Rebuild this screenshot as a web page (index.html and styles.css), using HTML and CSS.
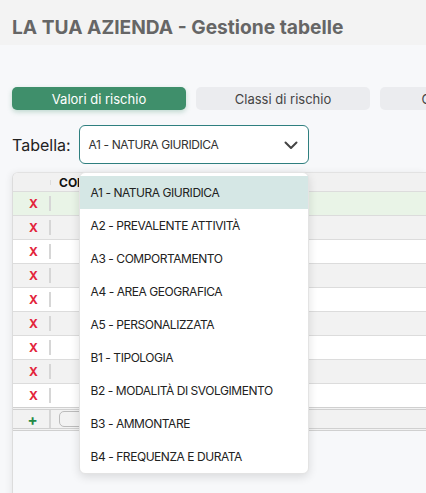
FILE: index.html
```html
<!DOCTYPE html>
<html lang="it">
<head>
  <meta charset="UTF-8">
  <title>Gestione tabelle</title>
  <link rel="stylesheet" href="styles.css">
</head>
<body>

  <!-- Intestazione -->
  <div class="topbar">
    <h1>LA TUA AZIENDA - Gestione tabelle</h1>
  </div>

  <!-- Schede -->
  <div class="tabs">
    <button class="tab active">Valori di rischio</button>
    <button class="tab">Classi di rischio</button>
    <button class="tab">Calcolo rischio</button>
  </div>

  <!-- Selezione tabella -->
  <div class="picker">
    <label class="picker-label">Tabella:</label>
    <div class="select-wrap">
      <div class="select-box">
        <span>A1 - NATURA GIURIDICA</span>
        <svg class="chevron" width="14" height="9" viewBox="0 0 14 9">
          <path d="M1.5 1.5 L7 7 L12.5 1.5" fill="none" stroke="#444" stroke-width="2" stroke-linecap="round" stroke-linejoin="round"/>
        </svg>
      </div>
      <ul class="dropdown">
        <li class="selected">A1 - NATURA GIURIDICA</li>
        <li>A2 - PREVALENTE ATTIVITÀ</li>
        <li>A3 - COMPORTAMENTO</li>
        <li>A4 - AREA GEOGRAFICA</li>
        <li>A5 - PERSONALIZZATA</li>
        <li>B1 - TIPOLOGIA</li>
        <li>B2 - MODALITÀ DI SVOLGIMENTO</li>
        <li>B3 - AMMONTARE</li>
        <li>B4 - FREQUENZA E DURATA</li>
      </ul>
    </div>
  </div>

  <!-- Griglia valori -->
  <div class="grid-card">
    <div class="grid-row head">
      <div class="cell-act"><span class="tick"></span></div>
      <div class="cell-cod">COD</div>
    </div>
    <div class="grid-row green"><div class="cell-act del">X</div><div class="cell-cod"></div></div>
    <div class="grid-row gray"><div class="cell-act del">X</div><div class="cell-cod"></div></div>
    <div class="grid-row"><div class="cell-act del">X</div><div class="cell-cod"></div></div>
    <div class="grid-row gray"><div class="cell-act del">X</div><div class="cell-cod"></div></div>
    <div class="grid-row"><div class="cell-act del">X</div><div class="cell-cod"></div></div>
    <div class="grid-row gray"><div class="cell-act del">X</div><div class="cell-cod"></div></div>
    <div class="grid-row"><div class="cell-act del">X</div><div class="cell-cod"></div></div>
    <div class="grid-row gray"><div class="cell-act del">X</div><div class="cell-cod"></div></div>
    <div class="grid-row"><div class="cell-act del">X</div><div class="cell-cod"></div></div>
    <div class="grid-row add">
      <div class="cell-act plus">+</div>
      <div class="cell-cod"><span class="new-input"></span></div>
    </div>
  </div>

</body>
</html>
```

FILE: styles.css
```css
body {
  margin: 0;
  font-family: Inter, "Noto Sans", sans-serif;
  background-color: #f7f8fa;
  overflow: hidden;
}
.topbar {
  background-color: #f3f3f3;
  padding: 16px 12px 7px;
}
.topbar h1 {
  margin: 0;
  font-size: 19.2px;
  line-height: 22px;
  font-weight: 700;
  color: #666;
}
.tabs {
  display: flex;
  gap: 10px;
  padding: 42px 0 0 12px;
}
.tab {
  flex: 0 0 174px;
  height: 23px;
  border: none;
  border-radius: 5px;
  background-color: #ebecef;
  color: #444;
  font-family: inherit;
  font-size: 13px;
  padding: 0;
}
.tab.active {
  background-color: #3f8f6b;
  color: white;
  box-shadow: 0 2px 5px rgba(63, 143, 107, 0.3);
}
.picker {
  display: flex;
  align-items: center;
  gap: 8px;
  padding: 15px 12px 0;
}
.picker-label {
  font-size: 16px;
  color: #222;
}
.select-wrap {
  position: relative;
}
.select-box {
  width: 230px;
  height: 39px;
  box-sizing: border-box;
  border: 1.5px solid #2f7f7f;
  border-radius: 6px;
  background: white;
  display: flex;
  align-items: center;
  justify-content: space-between;
  padding: 0 10px 0 9px;
  font-size: 12px;
  letter-spacing: -0.4px;
  color: #333;
}
.chevron {
  margin-top: 1px;
}
.dropdown {
  position: absolute;
  top: 47px;
  left: 0;
  width: 230px;
  box-sizing: border-box;
  margin: 0;
  padding: 3px 0 0;
  list-style: none;
  background: white;
  border: 1px solid #e3e3e3;
  border-radius: 6px;
  box-shadow: 0 3px 10px rgba(0, 0, 0, 0.12);
  z-index: 10;
}
.dropdown li {
  height: 33px;
  line-height: 33px;
  padding-left: 11px;
  font-size: 12px;
  letter-spacing: -0.45px;
  color: #222;
}
.dropdown li.selected {
  background-color: #d5e7e5;
}
.grid-card {
  margin: 8px 0 0 12px;
  min-height: 330px;
  border-left: 1px solid #dcdcdc;
  border-top: 1px solid #e2e2e2;
  border-top-left-radius: 6px;
  box-shadow: -2px 0 6px rgba(0, 0, 0, 0.06);
  overflow: hidden;
}
.grid-row {
  display: flex;
  height: 23px;
  background: white;
  border-bottom: 1px solid #dcdcdc;
}
.grid-row.head {
  height: 18px;
  background-color: #f1f1f1;
}
.grid-row.green {
  background-color: #e9f4e7;
}
.grid-row.gray {
  background-color: #f2f2f2;
}
.grid-row.add {
  height: 18px;
  background-color: #f2f2f2;
  border-top: 3px double #d0d0d0;
  border-bottom: 3px double #d0d0d0;
  margin-top: -1px;
}
.cell-act {
  width: 38px;
  box-sizing: border-box;
  padding-left: 3px;
  display: flex;
  align-items: center;
  justify-content: center;
  position: relative;
  font-weight: 700;
  font-size: 12px;
}
.cell-act::after {
  content: "";
  position: absolute;
  right: 0;
  top: 4px;
  bottom: 4px;
  width: 2px;
  background-color: #d6d6d6;
}
.head .cell-act::after,
.add .cell-act::after {
  display: none;
}
.add .cell-act {
  border-right: 2px solid #d6d6d6;
}
.tick {
  position: absolute;
  right: 0;
  top: 7px;
  width: 1px;
  height: 5px;
  background-color: #ddd;
}
.del {
  color: #e3243b;
}
.plus {
  color: #238a45;
  font-size: 15px;
}
.cell-cod {
  flex: 1;
  padding-left: 8px;
  display: flex;
  align-items: center;
  font-size: 12px;
  font-weight: 700;
  color: #111;
}
.new-input {
  width: 120px;
  height: 14px;
  border: 1px solid #bbb;
  border-radius: 5px;
}
```
